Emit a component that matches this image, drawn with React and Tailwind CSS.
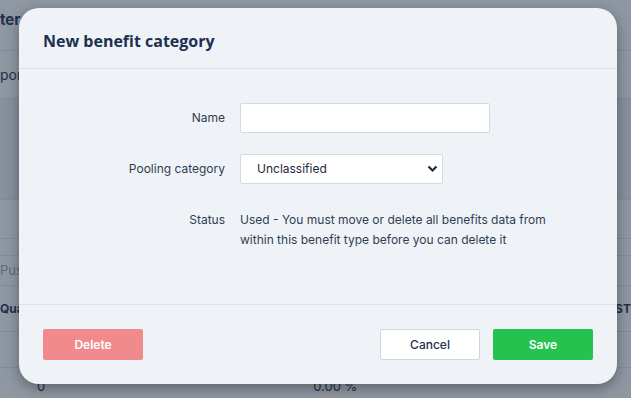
import { useState } from 'react';

// fragments of the page that peek out from behind the dialog
const rows = [
  { h: 'h-[50px]', cls: 'bg-white', text: 'ters', textCls: 'text-[15px] font-bold text-[#1e3350] pb-[10px]' },
  { h: 'h-[48px]', cls: 'bg-white border-t border-[#e5e7eb]', text: 'ports', textCls: 'text-[14px] text-[#1e3350]' },
  { h: 'h-[101px]', cls: 'bg-[#eef1f4] border-t border-[#e5e7eb]', text: '' },
  { h: 'h-[39px]', cls: 'bg-white border-t border-[#e5e7eb]', text: '' },
  { h: 'h-[17px]', cls: 'bg-white border-t border-[#e5e7eb]', text: '' },
  { h: 'h-[30px]', cls: 'bg-white border-t border-[#e5e7eb]', text: 'Push', textCls: 'text-[13px] text-[#9ca3af]' },
  { h: 'h-[46px]', cls: 'bg-white border-t border-[#e5e7eb]', text: 'Quantity', textCls: 'text-[12px] font-bold text-[#1e3350]', right: 'COST' },
  { h: 'h-[36px]', cls: 'bg-white border-t border-[#e5e7eb]', text: '' },
];

function Field({ label, children, top = false }) {
  return (
    <div className={`flex gap-[15px] ${top ? 'items-start' : 'items-center'}`}>
      <div className="w-[206px] shrink-0 text-right text-[12px] leading-5 text-[#2f3d52]">{label}</div>
      {children}
    </div>
  );
}

function App() {
  const [name, setName] = useState('');
  const [pool, setPool] = useState('Unclassified');

  return (
    <div className="relative h-[398px] w-[631px] overflow-hidden font-['Inter',sans-serif]">
      {/* page behind the dialog */}
      <div className="flex flex-col">
        {rows.map((r, i) => (
          <div key={i} className={`${r.h} ${r.cls} flex shrink-0 items-center justify-between`}>
            <span className={r.textCls}>{r.text}</span>
            {r.right && <span className="text-[12px] font-bold text-[#1e3350]">{r.right}</span>}
          </div>
        ))}
        <div className="flex h-[31px] items-start gap-[268px] border-t border-[#e5e7eb] bg-white pl-[37px] pt-[8px] text-[13px] leading-5 text-[#1e3350]">
          <span>0</span>
          <span>0.00 %</span>
        </div>
      </div>

      {/* backdrop */}
      <div className="absolute inset-0 bg-[#1f2f45]/50" />

      {/* dialog */}
      <div className="absolute left-[19px] top-[8px] flex h-[376px] w-[598px] flex-col rounded-[20px] bg-[#eff3f8] shadow-[0_4px_14px_rgba(0,0,0,0.35)]">
        <div className="flex h-[61px] items-center border-b border-[#e1e3e6] px-6 pt-[6px]">
          <h2 className="font-['Open_Sans',sans-serif] text-[16px] font-bold text-[#1c3050]">New benefit category</h2>
        </div>

        <div className="flex flex-1 flex-col gap-[21px] pt-[34px]">
          <Field label="Name">
            <input
              value={name}
              onChange={(e) => setName(e.target.value)}
              className="h-[30px] w-[250px] rounded-[2px] border border-[#d3d9df] bg-white px-3 text-[12px] outline-none"
            />
          </Field>
          <Field label="Pooling category">
            <div className="relative">
              <select
                value={pool}
                onChange={(e) => setPool(e.target.value)}
                className="h-[30px] w-[203px] appearance-none rounded-[2px] border border-[#d3d9df] bg-white pl-4 text-[12px] text-[#1e293b] outline-none"
              >
                <option>Unclassified</option>
                <option>Pooled</option>
                <option>Not pooled</option>
              </select>
              <svg
                className="pointer-events-none absolute right-[5px] top-[11px]"
                width="11"
                height="8"
                viewBox="0 0 11 8"
              >
                <path d="M1.5 1.5 L5.5 5.5 L9.5 1.5" fill="none" stroke="#1e293b" strokeWidth="2.2" />
              </svg>
            </div>
          </Field>
          <div className="pt-[5px]">
            <Field label="Status" top>
              <p className="w-[330px] text-[12px] leading-5 text-[#2f3d52]">
                Used - You must move or delete all benefits data from within this benefit type before you can delete it
              </p>
            </Field>
          </div>
        </div>

        <div className="flex h-[80px] items-start justify-between border-t border-[#e1e3e6] px-6 pt-[24px]">
          <button className="h-[31px] w-[100px] rounded-[2px] bg-[#f08a8c] text-[12px] font-semibold text-white">
            Delete
          </button>
          <div className="flex gap-[13px]">
            <button className="h-[31px] w-[100px] rounded-[2px] border border-[#ccd6dc] bg-white text-[12px] font-medium text-[#1c3050]">
              Cancel
            </button>
            <button className="h-[31px] w-[100px] rounded-[2px] bg-[#26c250] text-[12px] font-semibold text-white">
              Save
            </button>
          </div>
        </div>
      </div>
    </div>
  );
}

export default App;
